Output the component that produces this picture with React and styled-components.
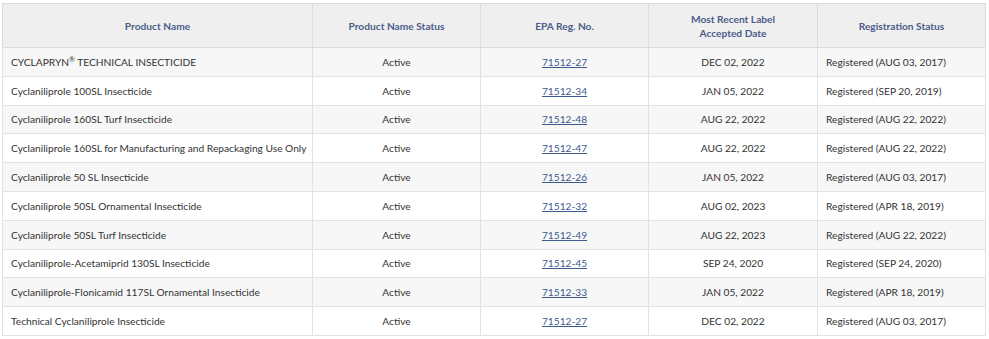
import styled, { createGlobalStyle } from 'styled-components';

const Global = createGlobalStyle`
    body {
        margin: 0;
        background: #fff;
        font-family: Lato, "Liberation Sans", sans-serif;
    }
`;

const Wrap = styled.div`
    padding: 3px 4px 0 2px;
`;

const Table = styled.table`
    width: 983px;
    border-collapse: collapse;
    table-layout: fixed;
    font-size: 10.2px;
    color: #333;
`;

const Th = styled.th`
    height: 43px;
    padding: 0 8px;
    background: #efefef;
    border: 1px solid #dcdcdc;
    color: #4b5c8a;
    font-weight: 700;
    line-height: 14px;
    text-align: center;
`;

const Row = styled.tr`
    background: ${(p) => (p.$odd ? '#f7f7f7' : '#fff')};
`;

const Td = styled.td`
    height: 27.8px;
    padding: 0 8px;
    border: 1px solid #e2e2e2;
    text-align: ${(p) => p.$align || 'center'};
    white-space: nowrap;
`;

const Mark = styled.sup`
    font-size: 7px;
    line-height: 0;
    vertical-align: 4px;
`;

const RegLink = styled.a`
    color: #3d5a8c;
    text-decoration: underline;
`;

const rows = [
    [<>CYCLAPRYN<Mark>®</Mark> TECHNICAL INSECTICIDE</>, '71512-27', 'DEC 02, 2022', 'AUG 03, 2017'],
    ['Cyclaniliprole 100SL Insecticide', '71512-34', 'JAN 05, 2022', 'SEP 20, 2019'],
    ['Cyclaniliprole 160SL Turf Insecticide', '71512-48', 'AUG 22, 2022', 'AUG 22, 2022'],
    ['Cyclaniliprole 160SL for Manufacturing and Repackaging Use Only', '71512-47', 'AUG 22, 2022', 'AUG 22, 2022'],
    ['Cyclaniliprole 50 SL Insecticide', '71512-26', 'JAN 05, 2022', 'AUG 03, 2017'],
    ['Cyclaniliprole 50SL Ornamental Insecticide', '71512-32', 'AUG 02, 2023', 'APR 18, 2019'],
    ['Cyclaniliprole 50SL Turf Insecticide', '71512-49', 'AUG 22, 2023', 'AUG 22, 2022'],
    ['Cyclaniliprole-Acetamiprid 130SL Insecticide', '71512-45', 'SEP 24, 2020', 'SEP 24, 2020'],
    ['Cyclaniliprole-Flonicamid 117SL Ornamental Insecticide', '71512-33', 'JAN 05, 2022', 'APR 18, 2019'],
    ['Technical Cyclaniliprole Insecticide', '71512-27', 'DEC 02, 2022', 'AUG 03, 2017'],
];

export default function App() {
    return (
        <Wrap>
            <Global />
            <Table>
                <colgroup>
                    <col style={{ width: 310 }} />
                    <col style={{ width: 168 }} />
                    <col style={{ width: 168 }} />
                    <col style={{ width: 169 }} />
                    <col style={{ width: 168 }} />
                </colgroup>
                <thead>
                    <tr>
                        <Th>Product Name</Th>
                        <Th>Product Name Status</Th>
                        <Th>EPA Reg. No.</Th>
                        <Th>Most Recent Label<br />Accepted Date</Th>
                        <Th>Registration Status</Th>
                    </tr>
                </thead>
                <tbody>
                    {rows.map((r, i) => (
                        <Row key={i} $odd={i % 2 === 0}>
                            <Td $align="left">{r[0]}</Td>
                            <Td>Active</Td>
                            <Td><RegLink href="#">{r[1]}</RegLink></Td>
                            <Td>{r[2]}</Td>
                            <Td $align="left">Registered ({r[3]})</Td>
                        </Row>
                    ))}
                </tbody>
            </Table>
        </Wrap>
    );
}
